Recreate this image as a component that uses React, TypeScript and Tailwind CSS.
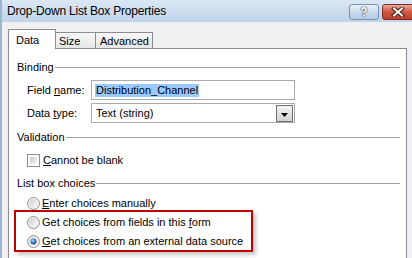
const Radio = ({ checked }: { checked?: boolean }) => (
  <svg width="13" height="13" viewBox="0 0 13 13" className="shrink-0">
    <defs>
      <linearGradient id="rb" x1="0" y1="0" x2="1" y2="1">
        <stop offset="0" stopColor="#cfcfcf" />
        <stop offset="1" stopColor="#fafafa" />
      </linearGradient>
      <radialGradient id="rd" cx="0.4" cy="0.35" r="0.7">
        <stop offset="0" stopColor="#b5dcfb" />
        <stop offset="0.5" stopColor="#3b87d4" />
        <stop offset="1" stopColor="#163f78" />
      </radialGradient>
    </defs>
    <circle cx="6.5" cy="6.5" r="6" fill="#f4f4f4" stroke="#8e8f8f" />
    <circle cx="6.5" cy="6.5" r="4.5" fill="url(#rb)" />
    {checked && <circle cx="6.5" cy="6.5" r="3" fill="url(#rd)" />}
  </svg>
);

const GroupHeader = ({ label }: { label: string }) => (
  <div className="flex items-center h-[14px] pl-[8px] pr-[6px]">
    <span className="leading-[13px]">{label}</span>
    <div className="flex-1 h-px bg-[#a0a0a0] ml-[1px]" />
  </div>
);

const App = () => {
  return (
    <div className="w-[412px] h-[258px] overflow-hidden bg-[#f0f0f0] border-l-2 border-[#9fb6d3] flex flex-col font-['Liberation_Sans',Arial,sans-serif] text-[11px] text-black">
      {/* title bar */}
      <div className="h-[22px] shrink-0 flex items-start bg-linear-to-b from-[#dce7f4] to-[#bfd4eb]">
        <span className="flex-1 pl-[5px] pt-[4px] text-[12px] leading-[15px] tracking-[-0.2px]">
          Drop-Down List Box Properties
        </span>
        <div className="mt-[4px] w-[30px] h-[16px] shrink-0 rounded-[3px] border border-[#7891b0] bg-linear-to-b from-[#e8f0f9] via-[#ccdcee] to-[#b3cae5] flex items-center justify-center">
          <span className="font-bold text-[12px] leading-[12px] text-white [text-shadow:0_0_1px_#2c3e55,0_0_1px_#2c3e55,0_0_1px_#2c3e55]">?</span>
        </div>
        <div className="mt-[4px] ml-[3px] mr-[-6px] w-[36px] h-[16px] shrink-0 rounded-[3px] border border-[#7c2b22] bg-linear-to-b from-[#e9a797] via-[#d0563f] to-[#c0402a] flex items-center justify-center pr-[4px]">
          <svg width="14" height="10" viewBox="0 0 14 10">
            <path d="M3 1.5 L11 8.5 M11 1.5 L3 8.5" stroke="#4a1a14" strokeWidth="4" strokeLinecap="square" />
            <path d="M3 1.5 L11 8.5 M11 1.5 L3 8.5" stroke="#ffffff" strokeWidth="2" strokeLinecap="square" />
          </svg>
        </div>
      </div>

      {/* tabs */}
      <div className="mt-[7px] ml-[6px] flex items-end relative z-10 -mb-px">
        <div className="h-[20px] w-[48px] border-l border-t border-r border-[#898c95] bg-white pl-[7px] pt-[4px] leading-[13px]">
          Data
        </div>
        <div className="h-[17px] w-[40px] border-t border-r border-b border-[#898c95] bg-linear-to-b from-[#f7f7f7] to-[#e6e6e6] pl-[3px] pt-[2px] leading-[13px]">
          Size
        </div>
        <div className="h-[17px] w-[57px] border-t border-r border-b border-[#898c95] bg-linear-to-b from-[#f7f7f7] to-[#e6e6e6] pl-[4px] pt-[2px] leading-[13px]">
          Advanced
        </div>
      </div>

      {/* panel */}
      <div className="ml-[6px] w-[399px] h-[230px] shrink-0 border border-[#898c95] bg-white pt-[11px]">
        <GroupHeader label="Binding" />

        <div className="mt-[6px] flex items-center h-[20px] pl-[18px]">
          <span className="w-[64px] leading-[13px]">
            Field <u>n</u>ame:
          </span>
          <div className="w-[204px] h-[20px] border border-[#a9abb0] flex items-center pl-[3px]">
            <span className="bg-[#99c9ff] leading-[13px] px-px">Distribution_Channel</span>
          </div>
        </div>

        <div className="mt-[3px] flex items-center h-[20px] pl-[18px]">
          <span className="w-[64px] leading-[13px]">
            Data <u>t</u>ype:
          </span>
          <div className="w-[204px] h-[20px] border border-[#a9abb0] flex items-center pl-[4px] pr-px">
            <span className="flex-1 leading-[13px]">Text (string)</span>
            <div className="w-[17px] h-[17px] border border-[#6f6f6f] bg-linear-to-b from-[#f4f4f4] to-[#d3d3d3] flex items-end justify-center pb-[4px]">
              <svg width="7" height="4" viewBox="0 0 7 4">
                <polygon points="0,0 7,0 3.5,4" fill="#000" />
              </svg>
            </div>
          </div>
        </div>

        <div className="mt-[7px]">
          <GroupHeader label="Validation" />
        </div>

        <div className="mt-[9px] flex items-center h-[14px] pl-[18px] gap-[3px]">
          <span className="w-[13px] h-[13px] shrink-0 border border-[#8e8f8f] bg-white p-[2px]">
            <span className="block w-full h-full bg-linear-to-br from-[#c9c9c9] to-[#f6f6f6]" />
          </span>
          <span className="leading-[13px]">
            <u>C</u>annot be blank
          </span>
        </div>

        <div className="mt-[9px]">
          <GroupHeader label="List box choices" />
        </div>

        <div className="mt-[6px] flex items-center h-[14px] pl-[18px] gap-[2px]">
          <Radio />
          <span className="leading-[13px]">
            <u>E</u>nter choices manually
          </span>
        </div>

        <div className="ml-[5px] w-[239px] border-2 border-[#c00000] pt-[3px] pb-[2px] pl-[11px] shadow-[3px_3px_4px_rgba(0,0,0,0.22)]">
          <div className="flex items-center h-[14px] gap-[2px]">
            <Radio />
            <span className="leading-[13px]">
              Get choices from fields in this <u>f</u>orm
            </span>
          </div>
          <div className="mt-[5px] flex items-center h-[14px] gap-[2px]">
            <Radio checked />
            <span className="leading-[13px]">
              <u>G</u>et choices from an external data source
            </span>
          </div>
        </div>
      </div>
    </div>
  );
};

export default App;
